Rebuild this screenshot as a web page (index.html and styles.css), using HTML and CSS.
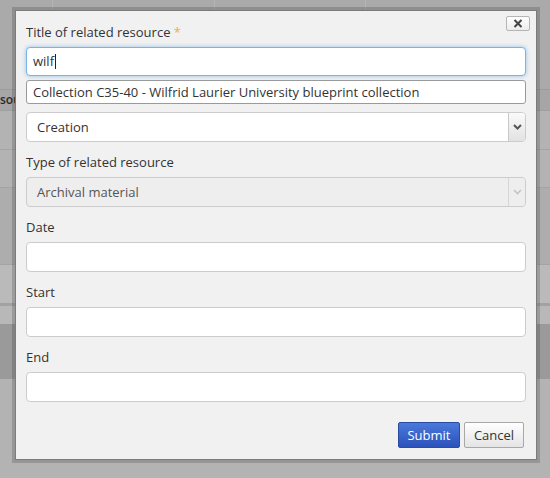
FILE: index.html
```html
<!DOCTYPE html>
<html>
<head>
<meta charset="utf-8">
<link rel="stylesheet" href="styles.css">
</head>
<body>
<div class="page">
  <div class="band b-top">
    <div class="col c1"></div><div class="col c2"></div><div class="col c3"></div><div class="col c4"></div>
  </div>
  <div class="band b-head"><span class="head-text">source</span></div>
  <div class="band b-row1"></div>
  <div class="band b-row2"></div>
  <div class="band b-row3"></div>
  <div class="band b-row4"></div>
  <div class="band b-row5"></div>
  <div class="band b-dark"></div>
  <div class="band b-bottom"></div>

  <div class="dialog">
    <button class="close" type="button" aria-label="Close">
      <svg width="10" height="9" viewBox="0 0 10 9"><path d="M1.5 1 L8.5 8 M8.5 1 L1.5 8" stroke="#444" stroke-width="2" fill="none"/></svg>
    </button>
    <div class="group">
      <label class="label">Title of related resource <span class="req">*</span></label>
      <div class="input focus">wilf<span class="caret"></span></div>
      <div class="suggest">Collection C35-40 - Wilfrid Laurier University blueprint collection</div>
      <div class="select">
        <span class="sel-text">Creation</span>
        <span class="arrow"><svg width="9" height="6" viewBox="0 0 9 6"><path d="M1 1 L4.5 4.5 L8 1" stroke="#555" stroke-width="2" fill="none"/></svg></span>
      </div>
    </div>
    <div class="group">
      <label class="label">Type of related resource</label>
      <div class="select disabled">
        <span class="sel-text">Archival material</span>
        <span class="arrow"><svg width="9" height="6" viewBox="0 0 9 6"><path d="M1 1 L4.5 4.5 L8 1" stroke="#c4c4c4" stroke-width="1.6" fill="none"/></svg></span>
      </div>
    </div>
    <div class="group">
      <label class="label">Date</label>
      <div class="input"></div>
    </div>
    <div class="group">
      <label class="label">Start</label>
      <div class="input"></div>
    </div>
    <div class="group">
      <label class="label">End</label>
      <div class="input"></div>
    </div>
    <div class="actions">
      <button class="btn primary" type="button">Submit</button>
      <button class="btn secondary" type="button">Cancel</button>
    </div>
  </div>
</div>
</body>
</html>
```
FILE: styles.css
```css
html, body {
  margin: 0;
  padding: 0;
}
body {
  font-family: "Open Sans", "Liberation Sans", sans-serif;
  font-size: 13px;
  color: #333;
  width: 550px;
  height: 478px;
  overflow: hidden;
}
.page {
  position: relative;
  width: 550px;
  height: 478px;
  overflow: hidden;
  background: #b3b3b3;
}
.band {
  width: 100%;
  box-sizing: border-box;
}
.b-top {
  height: 90px;
  background: #aaaaaa;
  border-bottom: 1px solid #9c9c9c;
  display: flex;
}
.col { height: 100%; border-right: 1px solid #b4b4b4; box-sizing: border-box; }
.c1 { width: 53px; }
.c2 { width: 162px; }
.c3 { width: 151px; }
.c4 { flex: 1; border-right: 0; }
.b-head {
  height: 21px;
  background: #a6a6a6;
  border-bottom: 1px solid #9f9f9f;
  overflow: hidden;
  white-space: nowrap;
  line-height: 19px;
}
.head-text {
  display: inline-block;
  font-weight: 600;
  font-size: 12px;
  color: #2a2a2a;
}
.b-row1 { height: 39px; background: #b3b3b3; border-bottom: 1px solid #a4a4a4; }
.b-row2 { height: 38px; background: #b3b3b3; border-bottom: 1px solid #a4a4a4; }
.b-row3 { height: 77px; background: #adadad; border-bottom: 1px solid #a4a4a4; }
.b-row4 { height: 41px; background: #bababa; border-bottom: 3px solid #a2a2a2; }
.b-row5 { height: 18px; background: #b8b8b8; }
.b-dark { height: 55px; background: #9a9a9a; }
.b-bottom { height: 97px; background: #b3b3b3; }

.dialog {
  position: absolute;
  left: 15px;
  top: 10px;
  width: 522px;
  height: 450px;
  box-sizing: border-box;
  background: #f1f1f1;
  border: 1px solid #7c7c7c;
  box-shadow: 0 0 0 3px rgba(0, 0, 0, 0.16);
  padding: 11px 10px 10px 10px;
}
.close {
  position: absolute;
  top: 5px;
  right: 6px;
  width: 24px;
  height: 15px;
  padding: 0;
  margin: 0;
  border: 1px solid #b5b5b5;
  border-radius: 2px;
  background: linear-gradient(#ffffff, #ececec);
  display: flex;
  align-items: center;
  justify-content: center;
}
.close svg { display: block; }
.group {
  margin-bottom: 10px;
}
.label {
  display: block;
  height: 18px;
  line-height: 20px;
  margin-bottom: 7px;
  color: #333;
}
.req { color: #f0ad4e; }
.input {
  height: 30px;
  box-sizing: border-box;
  background: #fff;
  border: 1px solid #cccccc;
  border-radius: 4px;
  padding: 0 6px;
  line-height: 28px;
  color: #333;
}
.input.focus {
  height: 29px;
  border-color: #7ab3ea;
  box-shadow: 0 0 4px rgba(102, 175, 233, 0.7);
  line-height: 27px;
}
.caret {
  display: inline-block;
  width: 1px;
  height: 15px;
  background: #222;
  vertical-align: -3px;
  margin-left: 1px;
}
.suggest {
  margin-top: 4px;
  height: 24px;
  box-sizing: border-box;
  background: #fff;
  border: 1px solid #9a9a9a;
  border-radius: 3px;
  padding: 0 6px;
  line-height: 22px;
  color: #333;
}
.select {
  margin-top: 8px;
  height: 30px;
  box-sizing: border-box;
  display: flex;
  align-items: stretch;
  background: #fff;
  border: 1px solid #cccccc;
  border-radius: 4px;
}
.group .label + .select { margin-top: 0; }
.sel-text {
  flex: 1;
  padding-left: 10px;
  line-height: 28px;
}
.arrow {
  width: 17px;
  box-sizing: border-box;
  border-left: 1px solid #c8c8c8;
  background: linear-gradient(#fafafa, #e2e2e2);
  border-radius: 0 3px 3px 0;
  display: flex;
  align-items: center;
  justify-content: center;
}
.select.disabled {
  background: #eeeeee;
  color: #555;
}
.select.disabled .arrow {
  background: #eeeeee;
  border-left-color: #d6d6d6;
}
.actions {
  display: flex;
  justify-content: flex-end;
  gap: 4px;
  margin-top: 20px;
  margin-right: 2px;
}
.btn {
  height: 26px;
  box-sizing: border-box;
  padding: 0;
  font-family: "Open Sans", "Liberation Sans", sans-serif;
  font-size: 13px;
  color: #333;
  border: 1px solid #a8a8a8;
  border-radius: 2px;
  background: linear-gradient(#ffffff, #e4e4e4);
  line-height: 24px;
  text-align: center;
}
.btn.primary {
  width: 62px;
  color: #fff;
  border-color: #2a4b9e;
  background: linear-gradient(#4a79db, #2b52bb);
}
.btn.secondary {
  width: 60px;
}
```
